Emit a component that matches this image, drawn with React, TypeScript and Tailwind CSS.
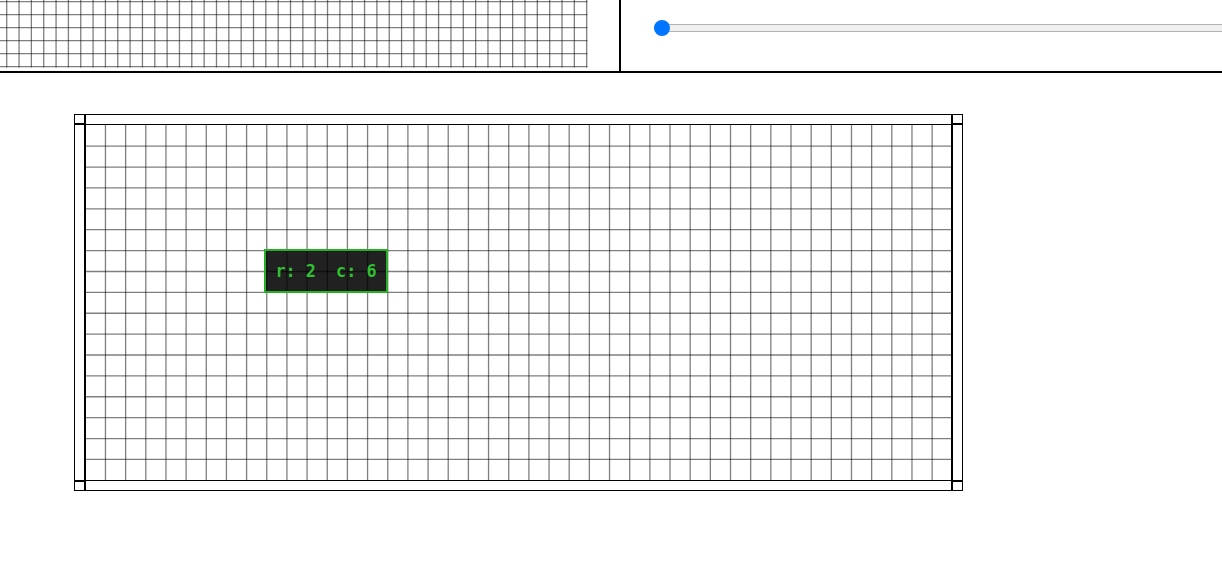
import React from 'react'

const LINE = 'rgba(0,0,0,0.5)'

/** 상단 미니맵 — 큰 격자의 축소판 (위쪽은 잘려 있음). */
function Minimap() {
  const cols = Array.from({ length: 48 }, (_, k) => 6.7 + k * 12.34)
  const rows = Array.from({ length: 6 }, (_, j) => 66.7 - j * 13)
  return (
    <svg width={619} height={71} className="block">
      {cols.map((x) => (
        <line key={`v${x}`} x1={x} y1={0} x2={x} y2={67.4} stroke={LINE} strokeWidth={1.3} />
      ))}
      {rows.map((y) => (
        <line key={`h${y}`} x1={0} y1={y} x2={587.4} y2={y} stroke={LINE} strokeWidth={1.3} />
      ))}
    </svg>
  )
}

function Slider() {
  return (
    <div className="relative flex h-4 w-[620px] items-center">
      <div className="h-2 w-full rounded-full border border-[#b2b2b2] bg-[#efefef]" />
      <div className="absolute left-0 top-0 size-4 rounded-full bg-[#0075ff]" />
    </div>
  )
}

const W = 867
const H = 355
const COLS = 43
const ROWS = 17

function Board() {
  const xs = Array.from({ length: COLS - 1 }, (_, i) => ((i + 1) * W) / COLS + 0.3)
  const ys = Array.from({ length: ROWS - 1 }, (_, j) => ((j + 1) * H) / ROWS + 0.3)
  return (
    <div className="relative">
      <svg width={W} height={H} className="block">
        {xs.map((x) => (
          <line key={`v${x}`} x1={x} y1={0} x2={x} y2={H} stroke={LINE} strokeWidth={1.3} />
        ))}
        {ys.map((y) => (
          <line key={`h${y}`} x1={0} y1={y} x2={W} y2={y} stroke={LINE} strokeWidth={1.3} />
        ))}
        <line x1={0.5} y1={0} x2={0.5} y2={H} stroke="#000" shapeRendering="crispEdges" />
        <line x1={W - 0.5} y1={0} x2={W - 0.5} y2={H} stroke="#000" shapeRendering="crispEdges" />
      </svg>
      <div className="absolute left-[179px] top-[124px] flex h-[44px] w-[124px] items-center justify-center border-2 border-[#26b026] bg-black/[0.87]">
        <span className="whitespace-pre font-['DejaVu_Sans_Mono',monospace] text-[16.8px] font-bold leading-none text-[#30c030]">
          r: 2  c: 6
        </span>
      </div>
    </div>
  )
}

export default function App() {
  return (
    <div className="h-[565px] w-[1222px] overflow-hidden bg-white font-['Liberation_Sans',sans-serif]">
      <header className="flex h-[73px] border-b-2 border-black">
        <div className="w-[621px] shrink-0 overflow-hidden border-r-2 border-black">
          <Minimap />
        </div>
        <div className="min-w-0 flex-1 overflow-hidden pl-[33px] pt-[20px]">
          <Slider />
        </div>
      </header>

      <main className="pl-[74px] pt-[41px]">
        <div className="grid h-[377px] w-[889px] grid-cols-[10px_1fr_10px] grid-rows-[10px_1fr_10px] border border-black">
          <div className="border-b-2 border-r border-black" />
          <div className="border-x border-b border-black" />
          <div className="border-b-2 border-l border-black" />

          <div className="border-r border-black" />
          <Board />
          <div className="border-l border-black" />

          <div className="border-r border-t-2 border-black" />
          <div className="border-x border-t border-black" />
          <div className="border-l border-t-2 border-black" />
        </div>
      </main>
    </div>
  )
}
